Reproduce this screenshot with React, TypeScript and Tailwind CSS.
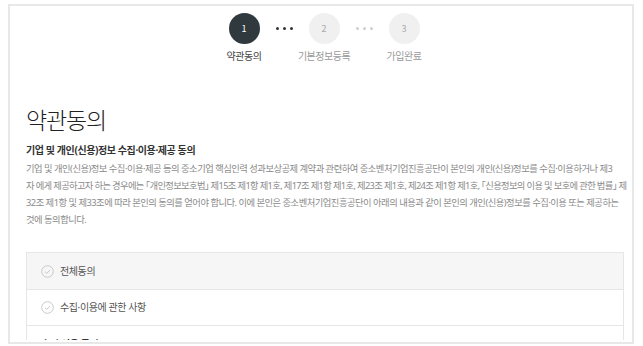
import React from "react";

const font = { fontFamily: '"Noto Sans CJK KR", "Noto Sans", sans-serif' };
const bodyFont = { fontFamily: '"Noto Sans", "Noto Sans CJK KR", sans-serif' };

function Dots({ dark }: { dark: boolean }) {
  const c = dark ? "bg-[#333333]" : "bg-[#cfcfcf]";
  return (
    <div className="w-[49px] flex items-center justify-center gap-[4px]">
      <span className={`w-[3px] h-[3px] rounded-full ${c}`} />
      <span className={`w-[3px] h-[3px] rounded-full ${c}`} />
      <span className={`w-[3px] h-[3px] rounded-full ${c}`} />
    </div>
  );
}

function CheckCircle() {
  return (
    <svg width="13" height="13" viewBox="0 0 13 13" className="shrink-0">
      <circle cx="6.5" cy="6.5" r="5.8" fill="none" stroke="#c8c8c8" strokeWidth="1" />
      <path d="M4 6.7 L5.8 8.4 L9 5" fill="none" stroke="#c8c8c8" strokeWidth="1" />
    </svg>
  );
}

export default function App() {
  return (
    <div className="w-[643px] h-[346px] bg-white overflow-hidden" style={font}>
      <div className="ml-[8px] mt-[4px] w-[626px] h-[340px] border-2 border-[#e8e8e8]">
        <div className="h-[334px] overflow-hidden flex flex-col">
          <div className="pt-[7px] flex flex-col items-center">
            <div className="flex items-center ml-[6px]">
              <div className="w-[31px] h-[31px] rounded-full bg-[#303a3e] text-white text-[9px] flex items-center justify-center">1</div>
              <Dots dark />
              <div className="w-[31px] h-[31px] rounded-full bg-[#f0f0f0] text-[#aaaaaa] text-[9px] flex items-center justify-center">2</div>
              <Dots dark={false} />
              <div className="w-[31px] h-[31px] rounded-full bg-[#f0f0f0] text-[#aaaaaa] text-[9px] flex items-center justify-center">3</div>
            </div>
            <div className="flex ml-[6px] mt-[5px] text-[10px] leading-[14px] tracking-[-0.5px]">
              <div className="w-[80px] text-center text-[#444444]">약관동의</div>
              <div className="w-[80px] text-center text-[#9a9a9a]">기본정보등록</div>
              <div className="w-[80px] text-center text-[#9a9a9a]">가입완료</div>
            </div>
          </div>
          <div className="pl-[16px] pr-[8px]">
            <h1 className="mt-[41px] text-[23px] leading-[30px] font-light text-[#222222] tracking-[-1.2px]">약관동의</h1>
            <div className="mt-[9px] text-[10px] leading-[15px] font-bold text-[#333333] tracking-[-0.4px]" style={bodyFont}>
              기업 및 개인(신용)정보 수집·이용·제공 동의
            </div>
            <div className="mt-[2px] text-[9.3px] leading-[17px] text-[#8a8a8a] tracking-[-0.5px] whitespace-nowrap [font-feature-settings:'halt']" style={bodyFont}>
              <div>기업 및 개인(신용)정보 수집·이용·제공 등의 중소기업 핵심인력 성과보상공제 계약과 관련하여 중소벤처기업진흥공단이 본인의 개인(신용)정보를 수집·이용하거나 제3</div>
              <div className="tracking-[-0.65px]">자 에게 제공하고자 하는 경우에는 「개인정보보호법」 제15조 제1항 제1호, 제17조 제1항 제1호, 제23조 제1호, 제24조 제1항 제1호, 「신용정보의 이용 및 보호에 관한 법률」 제</div>
              <div>32조 제1항 및 제33조에 따라 본인의 동의를 얻어야 합니다. 이에 본인은 중소벤처기업진흥공단이 아래의 내용과 같이 본인의 개인(신용)정보를 수집·이용 또는 제공하는</div>
              <div>것에 동의합니다.</div>
            </div>
            <div className="mt-[24px] border border-[#e6e6e6] text-[10px] text-[#555555] tracking-[-0.4px]" style={bodyFont}>
              <div className="h-[37px] bg-[#f6f6f6] border-b border-[#e6e6e6] flex items-center gap-[6px] pl-[14px]">
                <CheckCircle />
                <span>전체동의</span>
              </div>
              <div className="h-[36px] border-b border-[#e6e6e6] flex items-center gap-[6px] pl-[14px]">
                <CheckCircle />
                <span>수집·이용에 관한 사항</span>
              </div>
              <div className="h-[36px] flex items-center pl-[14px] font-bold text-[#333333]">
                <span>수집·이용 목적</span>
              </div>
            </div>
          </div>
        </div>
      </div>
    </div>
  );
}
